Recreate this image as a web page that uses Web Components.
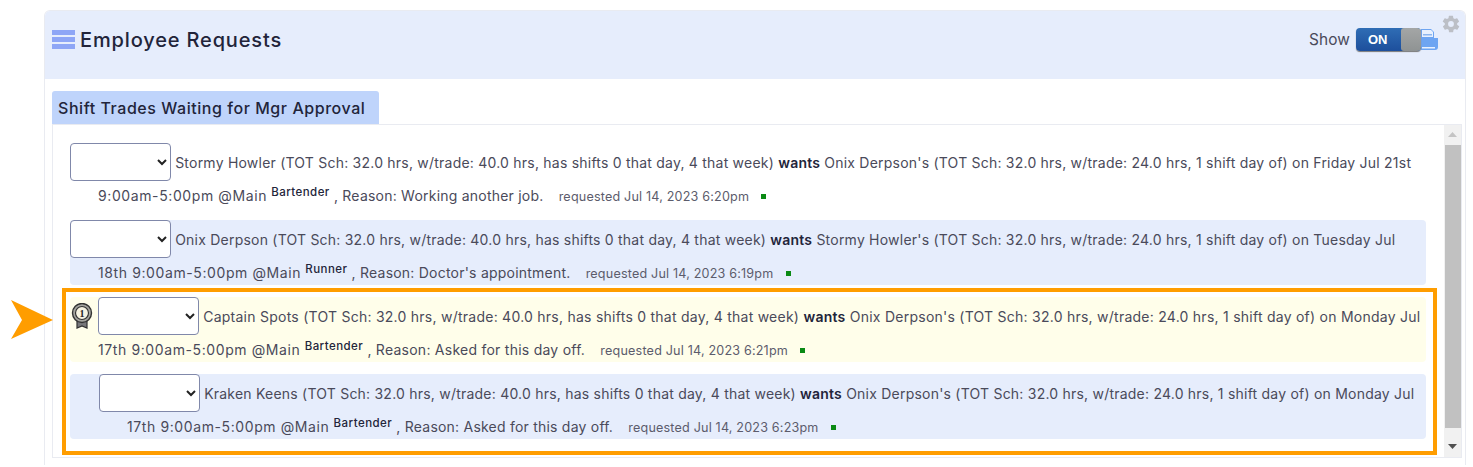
<!DOCTYPE html>
<html>
<head>
<meta charset="utf-8">
<style>
html, body { margin: 0; background: #fff; }
body { font-family: "Inter", "Liberation Sans", sans-serif; color: #4a4a5a; width: 1473px; height: 467px; overflow: hidden; position: relative; }
</style>
</head>
<body>
<emp-panel heading="Employee Requests">
  <panel-tab slot="tab">Shift Trades Waiting for Mgr Approval</panel-tab>
  <trade-row>
    Stormy Howler (TOT Sch: 32.0 hrs, w/trade: 40.0 hrs, has shifts 0 that day, 4 that week) <b>wants</b> Onix Derpson's (TOT Sch: 32.0 hrs, w/trade: 24.0 hrs, 1 shift day of) on Friday Jul 21st<br>
    <time>9:00am-5:00pm @Main</time> <sup>Bartender</sup> , Reason: Working another job. <small>requested Jul 14, 2023 6:20pm</small>
  </trade-row>
  <trade-row tint="blue">
    Onix Derpson (TOT Sch: 32.0 hrs, w/trade: 40.0 hrs, has shifts 0 that day, 4 that week) <b>wants</b> Stormy Howler's (TOT Sch: 32.0 hrs, w/trade: 24.0 hrs, 1 shift day of) on Tuesday Jul<br>
    <time>18th 9:00am-5:00pm @Main</time> <sup>Runner</sup> , Reason: Doctor's appointment. <small>requested Jul 14, 2023 6:19pm</small>
  </trade-row>
  <trade-row tint="yellow" medal>
    Captain Spots (TOT Sch: 32.0 hrs, w/trade: 40.0 hrs, has shifts 0 that day, 4 that week) <b>wants</b> Onix Derpson's (TOT Sch: 32.0 hrs, w/trade: 24.0 hrs, 1 shift day of) on Monday Jul<br>
    <time>17th 9:00am-5:00pm @Main</time> <sup>Bartender</sup> , Reason: Asked for this day off. <small>requested Jul 14, 2023 6:21pm</small>
  </trade-row>
  <trade-row tint="blue" nested>
    Kraken Keens (TOT Sch: 32.0 hrs, w/trade: 40.0 hrs, has shifts 0 that day, 4 that week) <b>wants</b> Onix Derpson's (TOT Sch: 32.0 hrs, w/trade: 24.0 hrs, 1 shift day of) on Monday Jul<br>
    <time>17th 9:00am-5:00pm @Main</time> <sup>Bartender</sup> , Reason: Asked for this day off. <small>requested Jul 14, 2023 6:23pm</small>
  </trade-row>
</emp-panel>
<callout-frame></callout-frame>

<script>
class PanelTab extends HTMLElement {
    constructor() {
        super()
        const shadow = this.attachShadow({mode: 'open'});
        shadow.innerHTML = `
        <style>
            :host {
                display: inline-block;
                background: #bfd4fb;
                color: #22243a;
                font-size: 16px;
                font-weight: 500;
                letter-spacing: .55px;
                line-height: 35px;
                height: 33px;
                padding: 0 13px 0 6px;
                border-radius: 3px 3px 0 0;
                box-sizing: border-box;
                width: 327px;
                white-space: nowrap;
            }
        </style>
        <slot></slot>
        `
    }
}
customElements.define('panel-tab', PanelTab)

class OnOffSwitch extends HTMLElement {
    constructor() {
        super()
        const shadow = this.attachShadow({mode: 'open'});
        shadow.innerHTML = `
        <style>
            :host { display: inline-block; position: relative; width: 84px; height: 24px; }
            .track {
                position: absolute; left: 0; top: 0;
                width: 65px; height: 23px;
                border-radius: 4px;
                background: linear-gradient(#2f6db5, #1d4f9c);
                box-shadow: 0 1px 1px #777;
                color: #fff;
                font: bold 13px/23px "Liberation Sans", sans-serif;
                overflow: hidden;
            }
            .track span { position: absolute; left: 12px; top: 0; }
            .knob {
                position: absolute; right: 0; top: 0;
                width: 20px; height: 23px;
                background: linear-gradient(#a4a6a6, #8f9393);
                border-radius: 3px;
            }
            svg { position: absolute; left: 64px; top: 0; }
        </style>
        <svg width="20" height="24" viewBox="0 0 20 24">
            <path d="M1 1h10l3 3v6h4v9a3 3 0 0 1-3 3H1z" fill="#6ea5f2"/>
            <path d="M2 2h9l2 2v5H2z" fill="#e9f1fe"/>
            <rect x="3" y="6" width="9" height="1.5" fill="#8db6ee"/>
            <rect x="2" y="19" width="13" height="1.5" fill="#e9f1fe"/>
        </svg>
        <div class="track"><span>ON</span><div class="knob"></div></div>
        `
    }
}
customElements.define('on-off-switch', OnOffSwitch)

class EmpPanel extends HTMLElement {
    constructor() {
        super()
        const shadow = this.attachShadow({mode: 'open'});
        shadow.innerHTML = `
        <style>
            :host {
                display: block;
                position: absolute;
                left: 44px; top: 10px;
                width: 1422px;
                height: 455px;
                box-sizing: border-box;
                border: 1px solid #e9ebf1;
                border-bottom: 0;
                border-radius: 6px 6px 0 0;
                background: #fff;
            }
            header {
                height: 68px;
                box-sizing: border-box;
                background: #e6edfc;
                display: flex;
                align-items: center;
                padding: 0 25px 11px 7px;
                position: relative;
                border-radius: 5px 5px 0 0;
            }
            .menu { display: block; margin-right: 5px; }
            h2 {
                margin: 0;
                font-size: 20px;
                font-weight: 500;
                color: #22243a;
                flex: 1;
                letter-spacing: .85px;
            }
            .show { font-size: 15.4px; letter-spacing: .1px; color: #4a4a5a; margin-right: 6px; }
            .gear { position: absolute; right: 4px; top: 3px; }
            .body { padding: 12px 3px 0 7px; }
            .tabs { height: 33px; display: flex; }
            .pane {
                border: 1px solid #e9ebf1;
                height: 332px;
                display: flex;
            }
            .list {
                flex: 1;
                display: flex;
                flex-direction: column;
                padding: 18px 18px 0 17px;
                gap: 12px;
                min-width: 0;
            }
            .bar {
                width: 17px;
                background: #f1f1f1;
                position: relative;
                flex: none;
            }
            .thumb { position: absolute; left: 1px; right: 0; top: 20px; height: 283px; background: #c1c1c1; }
            .bar svg { position: absolute; left: 4px; top: 319px; }
            .bar svg.up { top: 7px; }
        </style>
        <header>
            <svg class="menu" width="23" height="19" viewBox="0 0 23 19">
                <g fill="#8ea6f6">
                    <rect y="0" width="23" height="5"/><rect y="7" width="23" height="5"/><rect y="14" width="23" height="5"/>
                </g>
            </svg>
            <h2></h2>
            <span class="show">Show</span>
            <on-off-switch></on-off-switch>
            <svg class="gear" width="20" height="20" viewBox="0 0 24 24">
                <path fill="#bcbfc6" d="M19.4 13a7.6 7.6 0 0 0 0-2l2.1-1.6a.5.5 0 0 0 .1-.6l-2-3.5a.5.5 0 0 0-.6-.2l-2.5 1a7.3 7.3 0 0 0-1.7-1l-.4-2.7a.5.5 0 0 0-.5-.4h-4a.5.5 0 0 0-.5.4l-.4 2.7a7.3 7.3 0 0 0-1.7 1l-2.5-1a.5.5 0 0 0-.6.2l-2 3.5a.5.5 0 0 0 .1.6L4.6 11a7.6 7.6 0 0 0 0 2l-2.1 1.6a.5.5 0 0 0-.1.6l2 3.5c.1.2.4.3.6.2l2.5-1c.5.4 1.1.7 1.7 1l.4 2.7c0 .2.2.4.5.4h4c.3 0 .5-.2.5-.4l.4-2.7c.6-.3 1.2-.6 1.7-1l2.5 1c.2.1.5 0 .6-.2l2-3.5a.5.5 0 0 0-.1-.6zM12 15.5a3.5 3.5 0 1 1 0-7 3.5 3.5 0 0 1 0 7z"/>
            </svg>
        </header>
        <div class="body">
            <div class="tabs"><slot name="tab"></slot></div>
            <div class="pane">
                <div class="list"><slot></slot></div>
                <div class="bar">
                    <svg class="up" width="9" height="5" viewBox="0 0 9 5"><path d="M0 5l4.5-5L9 5z" fill="#c4c4c4"/></svg>
                    <div class="thumb"></div>
                    <svg width="9" height="5" viewBox="0 0 9 5"><path d="M0 0l4.5 5L9 0z" fill="#505050"/></svg>
                </div>
            </div>
        </div>
        `
        shadow.querySelector('h2').textContent = this.getAttribute('heading')
    }
}
customElements.define('emp-panel', EmpPanel)

class TradeRow extends HTMLElement {
    constructor() {
        super()
        const shadow = this.attachShadow({mode: 'open'});
        shadow.innerHTML = `
        <style>
            :host {
                display: block;
                height: 65px;
                box-sizing: border-box;
                padding: 0 0 0 28px;
                text-indent: -28px;
                border-radius: 4px;
                font-size: 14px;
                letter-spacing: .22px;
                line-height: 22px;
                color: #4a4a5a;
                white-space: nowrap;
            }
            :host([tint="blue"]) { background: #e6edfc; }
            :host([tint="yellow"]) { background: #fffeea; letter-spacing: .25px; }
            :host([nested]) { padding-left: 57px; }
            .medal { vertical-align: middle; margin: 0 5px 4px 1px; }
            select {
                width: 101px;
                height: 38px;
                box-sizing: border-box;
                vertical-align: middle;
                background: #fff;
                border: 1px solid #8088aa;
                border-radius: 4px;
                margin: 0 0 4px;
                text-indent: 0;
                color: #222;
            }
            ::slotted(time) { letter-spacing: .6px; }
            ::slotted(sup) { font-size: 11.5px; letter-spacing: .45px; font-weight: 500; color: #22243a; vertical-align: 5px; line-height: 0; }
            ::slotted(b) { font-weight: 600; color: #22243a; }
            ::slotted(small) { font-size: 12.6px; letter-spacing: .18px; margin-left: 11px; color: #5c5c6c; }
            .dot { display: inline-block; width: 5px; height: 5px; background: #0a8a14; margin-left: 8px; vertical-align: 2px; }
        </style>
        <select><option></option></select>
        <slot></slot><span class="dot"></span>
        `
        if (this.hasAttribute('medal')) {
            const tpl = document.createElement('template')
            tpl.innerHTML = `
            <svg class="medal" width="22" height="26" viewBox="0 0 22 26">
                <path d="M6 17v8l5-2 5 2v-8z" fill="#77777a" stroke="#333" stroke-width="1.2"/>
                <circle cx="11" cy="10" r="9.5" fill="#a5a5a0" stroke="#333" stroke-width="1.4"/>
                <circle cx="11" cy="10" r="6.5" fill="#f6f3e2" stroke="#333" stroke-width="1.2"/>
                <text x="11" y="13.5" font-size="10" font-weight="700" text-anchor="middle" fill="#222" font-family="Liberation Serif, serif">1</text>
            </svg>`
            shadow.insertBefore(tpl.content, shadow.querySelector('select'))
        }
    }
}
customElements.define('trade-row', TradeRow)

class CalloutFrame extends HTMLElement {
    constructor() {
        super()
        const shadow = this.attachShadow({mode: 'open'});
        shadow.innerHTML = `
        <style>
            :host { display: block; position: absolute; left: 0; top: 0; pointer-events: none; }
            .frame {
                position: absolute; left: 62px; top: 288px;
                width: 1375px; height: 167px;
                box-sizing: border-box;
                border: 4px solid #ff9d00;
            }
            svg { position: absolute; left: 10px; top: 300px; }
        </style>
        <div class="frame"></div>
        <svg width="44" height="40" viewBox="0 0 44 40"><path d="M1 0l42 20L1 39l11-19z" fill="#ff9d00"/></svg>
        `
    }
}
customElements.define('callout-frame', CalloutFrame)
</script>
</body>
</html>
